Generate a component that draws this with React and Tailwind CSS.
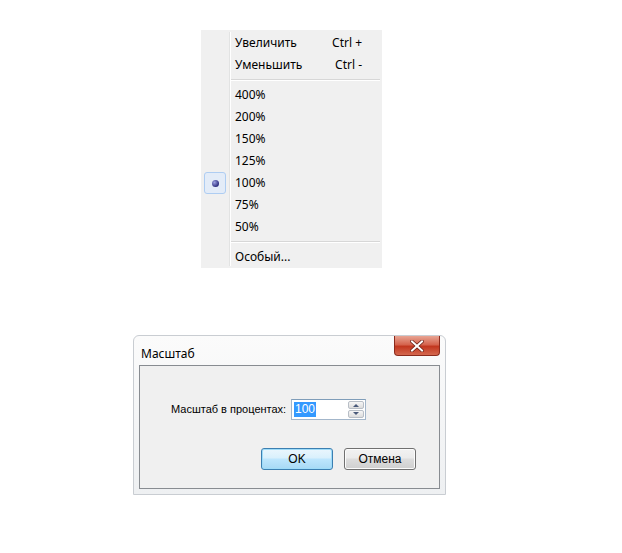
import React from "react";

const menuFont = { fontFamily: '"Noto Sans", "Open Sans", sans-serif' };

function Item({ label, shortcut, checked }) {
  return (
    <div className="flex h-[22px] items-center">
      <div className="flex w-[28px] justify-center">
        {checked ? (
          <div className="grid h-[22px] w-[22px] place-items-center rounded-[3px] border border-[#aecdf2] bg-[#e3ecf8]">
            <div className="h-[7px] w-[7px] rounded-full bg-[radial-gradient(circle_at_35%_35%,#9aa0e0,#2e2f80_70%)]" />
          </div>
        ) : null}
      </div>
      <div className="ml-[6px] flex-1 text-[12px] text-black">{label}</div>
      {shortcut ? (
        <div className="w-[50px] pr-[20px] text-right text-[12px] text-black">{shortcut}</div>
      ) : null}
    </div>
  );
}

function Sep() {
  return (
    <div className="flex h-[8px] items-center pl-[29px]">
      <div className="ml-[1px] mr-[2px] h-[2px] flex-1 border-t border-b border-[#d7d7d7] border-b-white" />
    </div>
  );
}

function ZoomMenu() {
  const items = ["400%", "200%", "150%", "125%", "100%", "75%", "50%"];
  return (
    <div
      className="relative h-[238px] w-[181px] bg-[#f0f0f0] py-[2px]"
      style={menuFont}
    >
      <div className="pointer-events-none absolute bottom-[2px] left-[28px] top-[2px] w-[2px] border-l border-[#e2e3e3] bg-white" />
      <div className="relative">
        <Item label="Увеличить" shortcut="Ctrl +" />
        <Item label="Уменьшить" shortcut="Ctrl -" />
        <Sep />
        {items.map((p) => (
          <Item key={p} label={p} checked={p === "100%"} />
        ))}
        <Sep />
        <Item label="Особый..." />
      </div>
    </div>
  );
}

function ZoomDialog() {
  return (
    <div className="relative h-[160px] w-[313px] rounded-t-[6px] border border-[#c9cdd2] bg-[linear-gradient(180deg,#fbfbfb,#eef0f2)] px-[5px] pb-[6px]">
      <div className="flex h-[29px] items-start justify-between">
        <div
          className="mt-[9px] ml-[2px] text-[12px] text-black"
          style={{ fontFamily: '"Noto Sans", "Open Sans", sans-serif' }}
        >
          Масштаб
        </div>
        <div className="grid h-[20px] w-[46px] place-items-center rounded-b-[4px] border border-t-0 border-[#8b2a1c] bg-[linear-gradient(180deg,#e8a493_0%,#d5644e_45%,#c2371f_55%,#d4684f_100%)]">
          <svg width="14" height="12" viewBox="0 0 14 12">
            <path
              d="M2 1.5 L12 10.5 M12 1.5 L2 10.5"
              stroke="#6b2015"
              strokeWidth="3.6"
              strokeLinecap="square"
            />
            <path
              d="M2 1.5 L12 10.5 M12 1.5 L2 10.5"
              stroke="#ffffff"
              strokeWidth="2"
              strokeLinecap="square"
            />
          </svg>
        </div>
      </div>
      <div
        className="h-[124px] border border-[#888c91] bg-[#f0f0f0] pt-[33px]"
        style={{ fontFamily: '"Liberation Sans", Arial, sans-serif' }}
      >
        <div className="flex h-[21px] items-center pl-[31px]">
          <div className="w-[120px] shrink-0 whitespace-nowrap text-[11px] text-black">
            Масштаб в процентах:
          </div>
          <div className="flex h-[21px] w-[75px] items-center border border-[#a3b6ca] border-t-[#7f9db9] bg-white pl-[2px]">
            <span className="bg-[#3399ff] px-[1px] text-[12px] leading-[15px] text-white">
              100
            </span>
            <div className="ml-auto mr-[1px] flex flex-col gap-[1px]">
              <div className="grid h-[8px] w-[16px] place-items-center rounded-[2px] border border-[#b8bec6] bg-[linear-gradient(180deg,#f6f6f6,#dcdcdc)]">
                <svg width="6" height="4" viewBox="0 0 6 4">
                  <path d="M0 4 L3 1 L6 4 Z" fill="#4a5a7a" />
                </svg>
              </div>
              <div className="grid h-[8px] w-[16px] place-items-center rounded-[2px] border border-[#b8bec6] bg-[linear-gradient(180deg,#f6f6f6,#dcdcdc)]">
                <svg width="6" height="4" viewBox="0 0 6 4">
                  <path d="M0 0 L3 3 L6 0 Z" fill="#4a5a7a" />
                </svg>
              </div>
            </div>
          </div>
        </div>
        <div className="mt-[28px] flex justify-end gap-[11px] pr-[23px]">
          <button
            type="button"
            className="h-[22px] w-[72px] rounded-[3px] border border-[#3c7fb1] bg-[linear-gradient(180deg,#eaf6fd_0%,#d9f0fc_45%,#bee6fd_50%,#a7d9f5_100%)] text-[12px] text-black shadow-[inset_0_0_0_1px_#9fdcf9]"
          >
            OK
          </button>
          <button
            type="button"
            className="h-[22px] w-[72px] rounded-[3px] border border-[#707070] bg-[linear-gradient(180deg,#f2f2f2_0%,#ebebeb_45%,#dddddd_50%,#cfcfcf_100%)] text-[12px] text-black shadow-[inset_0_0_0_1px_#fcfcfc]"
          >
            Отмена
          </button>
        </div>
      </div>
    </div>
  );
}

export default function App() {
  return (
    <div className="h-[553px] w-[622px] bg-white">
      <div className="pl-[201px] pt-[30px]">
        <ZoomMenu />
      </div>
      <div className="pl-[133px] pt-[67px]">
        <ZoomDialog />
      </div>
    </div>
  );
}
